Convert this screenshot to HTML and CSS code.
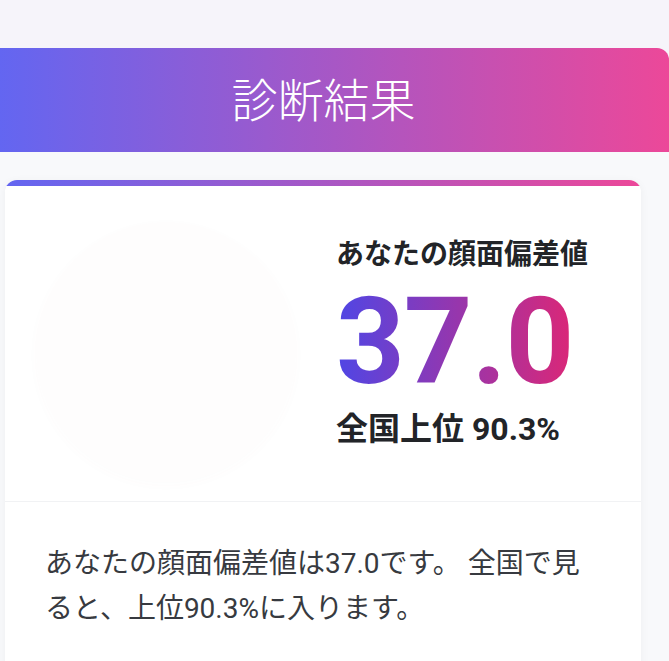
FILE: index.html
```html
<!DOCTYPE html>
<html lang="ja">
<head>
<meta charset="utf-8">
<title>診断結果</title>
<link rel="stylesheet" href="styles.css">
</head>
<body>
<div class="page">
  <div class="top-space"></div>
  <header class="banner">
    <h1 class="banner-title">診断結果</h1>
  </header>
  <main class="content">
    <section class="card">
      <div class="card-bar"></div>
      <div class="result">
        <div class="avatar"></div>
        <div class="score">
          <p class="score-label">あなたの顔面偏差値</p>
          <p class="score-value">37.0</p>
          <p class="score-rank">全国上位 90.3%</p>
        </div>
      </div>
      <div class="desc">
        <p>あなたの顔面偏差値は37.0です。 全国で見ると、上位90.3%に入ります。</p>
      </div>
    </section>
  </main>
</div>
</body>
</html>
```

FILE: styles.css
```css
html, body {
  margin: 0;
  padding: 0;
}
body {
  background: #f6f4fa;
  font-family: "Roboto", "Noto Sans CJK JP", "Noto Sans", sans-serif;
  color: #1f2228;
  overflow: hidden;
}
.page {
  width: 669px;
  height: 661px;
  overflow: hidden;
}
.top-space {
  height: 48px;
}
.banner {
  margin-left: -22px;
  height: 104px;
  display: flex;
  align-items: center;
  justify-content: center;
  background: linear-gradient(90deg, #6366f1 0%, #ec4899 100%);
  background-size: 669px 100%;
  background-position: 22px 0;
  border-radius: 0 12px 0 0;
}
.banner-title {
  margin: 0;
  font-family: "Noto Sans CJK JP", sans-serif;
  font-size: 46px;
  font-weight: 300;
  color: #ffffff;
  line-height: 1;
  padding-bottom: 6px;
}
.content {
  background: #f8f9fb;
  padding: 28px 28px 0 5px;
  height: 600px;
}
.card {
  background: #ffffff;
  border-radius: 12px 12px 0 0;
  overflow: hidden;
  box-shadow: 0 2px 10px rgba(17, 24, 39, 0.05);
}
.card-bar {
  height: 6px;
  background: linear-gradient(90deg, #6366f1 0%, #ec4899 100%);
}
.result {
  display: flex;
  align-items: flex-start;
  gap: 40px;
  padding: 36px 31px 19px 31px;
  border-bottom: 1px solid #f1f2f4;
}
.avatar {
  flex: none;
  width: 260px;
  height: 260px;
  border-radius: 50%;
  background: #fefdfd;
  box-shadow: 0 3px 12px rgba(150, 110, 120, 0.02);
}
.score {
  margin-top: 13px;
}
.score p {
  margin: 0;
}
.score-label {
  font-size: 28px;
  font-weight: 700;
  line-height: 39px;
  color: #222428;
}
.score-value {
  margin-top: 8px !important;
  font-size: 120px;
  font-weight: 700;
  line-height: 120px;
  letter-spacing: -1px;
  background: linear-gradient(90deg, #4f46e5 0%, #db2777 100%);
  -webkit-background-clip: text;
  background-clip: text;
  color: transparent;
  display: inline-block;
}
.score-rank {
  margin-top: 8px !important;
  font-size: 32px;
  font-weight: 700;
  line-height: 39px;
  color: #222428;
}
.desc {
  padding: 39px 40px 40px 40px;
}
.desc p {
  margin: 0;
  font-size: 28px;
  line-height: 45px;
  color: #373a40;
}
```
